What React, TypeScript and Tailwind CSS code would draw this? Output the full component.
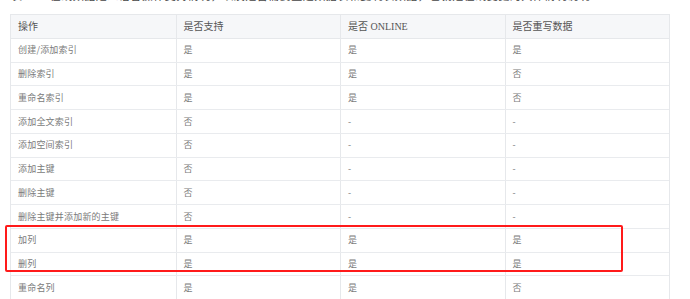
import React from "react";

const rows: [string, string, string, string][] = [
  ["创建/添加索引", "是", "是", "是"],
  ["删除索引", "是", "是", "否"],
  ["重命名索引", "是", "是", "否"],
  ["添加全文索引", "否", "-", "-"],
  ["添加空间索引", "否", "-", "-"],
  ["添加主键", "否", "-", "-"],
  ["删除主键", "否", "-", "-"],
  ["删除主键并添加新的主键", "否", "-", "-"],
  ["加列", "是", "是", "是"],
  ["删列", "是", "是", "是"],
  ["重命名列", "是", "是", "否"],
];

export default function App() {
  return (
    <div className="relative w-[690px] h-[299px] overflow-hidden bg-white">
      <div
        className="h-[14px] overflow-hidden pl-[11px] text-[#444] text-[11px] leading-[14px] whitespace-nowrap"
        style={{ fontFamily: '"Liberation Serif","Noto Sans CJK SC",serif' }}
      >
        <div className="-mt-[11px] tracking-[0.5px]">
          表 1 　 在线数据定义语言操作支持情况，以及是否需要重建数据表和复制表数据，也就是在线变更的具体情况说明
        </div>
      </div>
      <div className="ml-[10px] w-[660px] border-l border-t border-r border-[#e6e8eb]">
        <div
          className="grid grid-cols-4 h-[23.75px] bg-[#f6f7f9] border-b border-[#e6e8eb] text-[10px] text-[#555]"
          style={{ fontFamily: '"Liberation Serif","Noto Sans CJK SC",serif' }}
        >
          {["操作", "是否支持", "是否 ONLINE", "是否重写数据"].map((h, i) => (
            <div
              key={i}
              className={`flex items-center pl-[7px] ${i > 0 ? "border-l border-[#e6e8eb]" : ""}`}
            >
              {h}
            </div>
          ))}
        </div>
        {rows.map((r, ri) => (
          <div
            key={ri}
            className="grid grid-cols-4 h-[23.75px] border-b border-[#e9ebee] text-[9px] text-[#7a7a7a] tracking-[0.2px]"
            style={{ fontFamily: '"Noto Sans CJK SC","Liberation Sans",sans-serif' }}
          >
            {r.map((c, ci) => (
              <div
                key={ci}
                className={`flex items-center pl-[7px] ${ci > 0 ? "border-l border-[#e6e8eb]" : ""}`}
              >
                {c}
              </div>
            ))}
          </div>
        ))}
      </div>
      <div className="absolute left-[5px] top-[225px] w-[618px] h-[47px] border-2 border-[#ff1a1a] rounded-[2px] pointer-events-none" />
    </div>
  );
}
